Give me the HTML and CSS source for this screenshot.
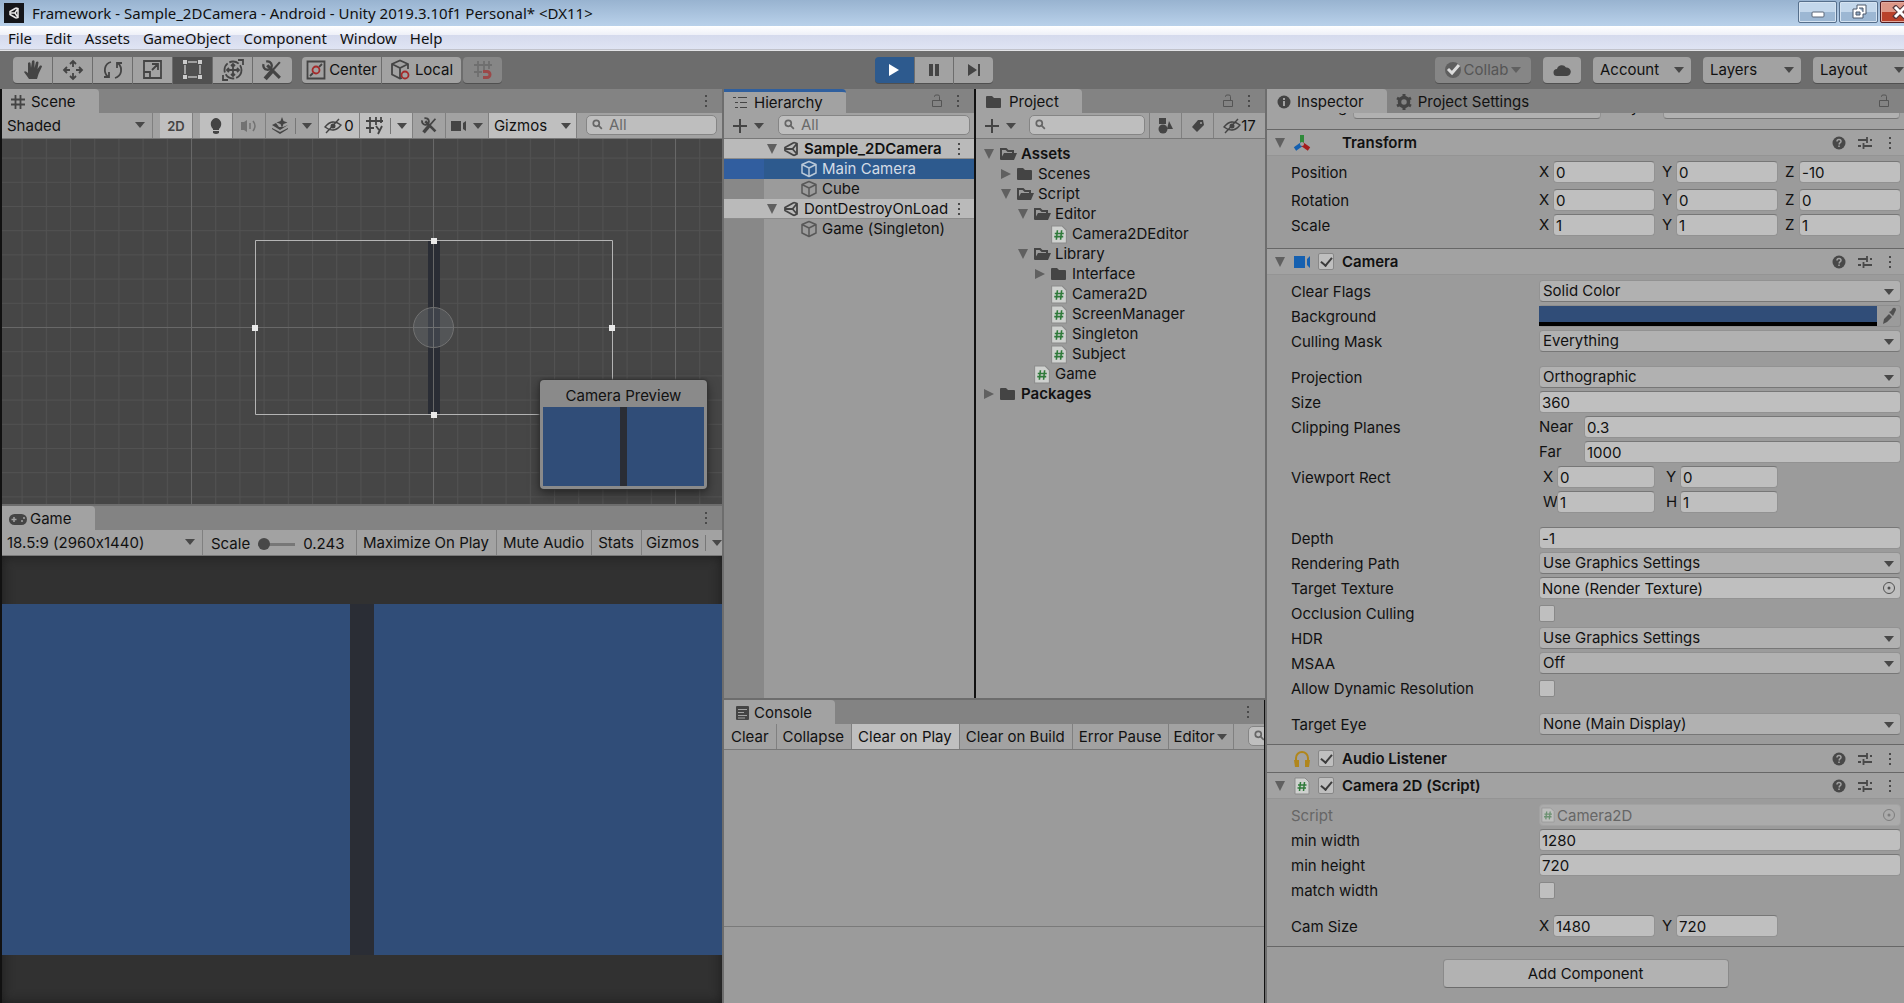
FILE: index.html
```html
<!DOCTYPE html>
<html lang="en">
<head>
  <meta charset="UTF-8" />
  <meta name="viewport" content="width=device-width, initial-scale=1.0" />
  <title>Framework - Sample_2DCamera</title>
  <link rel="stylesheet" href="styles.css">
</head>
<body>
  <!-- shared icons -->
  <svg class="defs" aria-hidden="true">
    <symbol id="i-dots" viewBox="0 0 4 14"><path d="M1 1h2v2H1zM1 6h2v2H1zM1 11h2v2H1z" /></symbol>
    <symbol id="i-lock" viewBox="0 0 12 14"><path d="M1.5 6.5h9v6h-9zM3.5 3V2.5q0-1.500 1.500-1.500h2q1.500 0 1.500 1.500v4" fill="none" stroke="currentColor" /></symbol>
    <symbol id="i-search" viewBox="0 0 14 14"><circle cx="5" cy="5" r="3.500" fill="none" stroke="currentColor" stroke-width="2" /><path d="M7.500 7.500l4 4" stroke="currentColor" stroke-width="2" /></symbol>
    <symbol id="i-plus" viewBox="0 0 16 16"><path d="M7 1h2v6h6v2H9v6H7V9H1V7h6z" /></symbol>
    <symbol id="i-down" viewBox="0 0 10 6"><path d="M0 0h10L5 6z" /></symbol>
    <symbol id="i-open" viewBox="0 0 12 12"><path d="M1 1h10L6 11z" /></symbol>
    <symbol id="i-closed" viewBox="0 0 12 12"><path d="M1 1v10l10-5z" /></symbol>
    <symbol id="i-folder" viewBox="0 0 18 16"><path d="M1 3q0-1 1-1h5l2 2h6q1 0 1 1v8q0 1-1 1H2q-1 0-1-1z" /></symbol>
    <symbol id="i-folder-open" viewBox="0 0 18 16"><path d="M2 13V3h5l2 2h5v2" fill="none" stroke="currentColor" stroke-width="2" /><path d="M5 7h13l-3 7H1z" /></symbol>
    <symbol id="i-script" viewBox="0 0 16 18"><path d="M1 1h10l4 4v12H1z" fill="#cfd1cf" stroke="#8b8b8b" /><path d="M6.500 5L5.500 14M10.500 5L9.500 14M4 8h8.500M3.500 11H12" stroke="#2f7a3a" stroke-width="1.500" fill="none" /></symbol>
    <symbol id="i-cube" viewBox="0 0 18 18"><path d="M9 1.500l7 3v8.500l-7 3.500-7-3.500V4.500zM2 4.500l7 3.500 7-3.500M9 8v8.500" fill="none" stroke="currentColor" stroke-width="1.500" stroke-linejoin="round" /></symbol>
    <symbol id="i-unity" viewBox="0 0 18 18"><path d="M12 2.500L3 7.500v3l9 5M12 2.500l3 1v10.500l-3 1.500M3 9h7.500M10.500 9L15 3.500M10.500 9L15 14" fill="none" stroke="currentColor" stroke-width="1.800" stroke-linejoin="round" /></symbol>
    <symbol id="i-help" viewBox="0 0 14 14"><circle cx="7" cy="7" r="6.500" /><path d="M5 5.500Q5 3.500 7 3.500T9 5.500Q9 6.500 7.500 7.200L7 8.500M7 9.500v1.500" fill="none" stroke="#a2a2a2" stroke-width="1.500" /></symbol>
    <symbol id="i-preset" viewBox="0 0 14 14"><path d="M0 4h9M12 4h2M9 1v6M0 10h3M6 10h8M5.500 7v6" fill="none" stroke="currentColor" stroke-width="1.800" /></symbol>
    <symbol id="i-picker" viewBox="0 0 14 14"><circle cx="7" cy="7" r="5.500" fill="none" stroke="currentColor" /><circle cx="7" cy="7" r="1.500" /></symbol>
    <symbol id="i-tools" viewBox="0 0 20 20"><path d="M5 5l12 12" stroke="currentColor" stroke-width="3" /><path d="M4 1.500A4 4 0 1 1 1.500 4" fill="none" stroke="currentColor" stroke-width="2.200" /><path d="M17 2L9 11" stroke="currentColor" stroke-width="2" /><path d="M9.500 10.500L3 18" stroke="currentColor" stroke-width="4" /></symbol>
    <symbol id="i-eye" viewBox="0 0 18 16"><path d="M1 9q7-9 16-2-7 9-16 2z" fill="none" stroke="currentColor" stroke-width="1.400" /><circle cx="9" cy="8" r="2.500" /><path d="M2 15L15 1" stroke="currentColor" stroke-width="1.400" /></symbol>
  </svg>

  <header class="titlebar">
    <svg class="app-icon" viewBox="0 0 20 20"><rect width="20" height="20" fill="#15161a" /><path d="M12 5L6 8.500v3l6 3.500M12 5l2 .5v9l-2 .5M6 10h5l3-4.500M11 10l3 4.500" fill="none" stroke="#e8e8e8" stroke-width="1.500" /></svg>
    <span class="title">Framework - Sample_2DCamera - Android - Unity 2019.3.10f1 Personal* &lt;DX11&gt;</span>
    <div class="window-buttons">
      <button aria-label="Minimize"><svg width="14" height="14"><rect x="1" y="7" width="12" height="5" rx="1" fill="#fff" stroke="#5a6678" /></svg></button>
      <button aria-label="Restore"><svg width="16" height="16"><path d="M6 1h9v9h-3v4H2V5h4z" fill="#fff" stroke="#4c586a" /><path d="M5 8h4v3H5zM8 4h4v4" fill="#93abc6" stroke="#4c586a" /></svg></button>
      <button class="close" aria-label="Close"><svg width="16" height="14"><path d="M2 1l12 12M14 1L2 13" stroke="#53353a" stroke-width="5" /><path d="M3 2l10 10M13 2L3 12" stroke="#fff" stroke-width="3" /></svg></button>
    </div>
  </header>

  <nav class="menubar">
    <a href="#">File</a><a href="#">Edit</a><a href="#">Assets</a><a href="#">GameObject</a><a href="#">Component</a><a href="#">Window</a><a href="#">Help</a>
  </nav>

  <div class="toolbar">
    <div class="group tools">
      <button aria-label="Hand"><svg width="20" height="22" viewBox="0 0 20 22"><path d="M6 20q-2-3-5-7 1-2 4 1V4q1.500-1.500 2.500 0l.5 5 1-7q1.500-1.500 2.500 0v7l1.500-6q2-1 2.500.5L14.500 10 17 6.500q2-.5 2 1L15.500 15 14 20z" /></svg></button>
      <button aria-label="Move"><svg width="22" height="22" viewBox="0 0 22 22" class="line"><path d="M11 2v6M11 14v6M2 11h6M14 11h6M8 5l3-3 3 3M8 17l3 3 3-3M5 8l-3 3 3 3M17 8l3 3-3 3" /></svg></button>
      <button aria-label="Rotate"><svg width="22" height="22" viewBox="0 0 22 22" class="line"><path d="M9 3C2 5 1 13 6 18M2 18h5v-5M13 19c7-2 8-10 3-15M20 4h-5v5" /></svg></button>
      <button aria-label="Scale"><svg width="22" height="22" viewBox="0 0 22 22" class="line"><path d="M2 2h17v17H2zM2 13h6v6M10 11l6-6M10 5h6v6" /></svg></button>
      <button class="pressed" aria-label="Rect"><svg width="22" height="22" viewBox="0 0 22 22"><path d="M6 3h9M6 18h9M3 6v9M18 6v9" fill="none" stroke="#bbb" stroke-width="1.500" /><path d="M1 1h4v4H1zM16 1h4v4h-4zM1 16h4v4H1zM16 16h4v4h-4z" fill="#ccc" /></svg></button>
      <button aria-label="Transform"><svg width="24" height="24" viewBox="0 0 24 24" class="line"><circle cx="12" cy="12" r="8.500" stroke-dasharray="10 2" /><path d="M12 6v12M6 12h12M10 8l2-2 2 2M10 16l2 2 2-2M8 10l-2 2 2 2M16 10l2 2-2 2M17 2h5v5M7 22H2v-5" /></svg></button>
      <button aria-label="Custom tools"><svg width="21" height="21"><use href="#i-tools" /></svg></button>
    </div>
    <div class="group pivot">
      <button><svg width="20" height="20" viewBox="0 0 20 20" class="line"><path d="M1.500 1.500h17v17h-17zM4 16l3-3M13 7l3-3" /><circle cx="10" cy="10" r="3.500" stroke="#a52a2a" /></svg>Center</button>
      <button><svg width="22" height="22" viewBox="0 0 22 22" class="line"><path d="M12 19l-2 .5-8-4V5l8-3.500L18 5v5M2 5l8 4 8-4M10 9v10" /><circle cx="15" cy="16" r="3.500" stroke="#a52a2a" /></svg>Local</button>
    </div>
    <div class="group snap">
      <button disabled aria-label="Grid snapping"><svg width="20" height="20" viewBox="0 0 20 20" class="line"><path d="M5 1v16M11 1v9M16 1v8M1 5h18M1 12h8" /><path d="M10 11.500h4a3 3 0 0 1 0 6h-4" stroke="#a53030" stroke-width="3" /></svg></button>
    </div>
    <div class="group play">
      <button class="active" aria-label="Play"><svg width="12" height="14"><path d="M1 1v12l10-6z" fill="#fff" /></svg></button>
      <button aria-label="Pause"><svg width="12" height="14"><path d="M1 1h4v12H1zM7 1h4v12H7z" /></svg></button>
      <button aria-label="Step"><svg width="14" height="14"><path d="M1 1v12l9-6zM11 1h2v12h-2z" /></svg></button>
    </div>
    <div class="right-tools">
      <button class="collab" disabled><svg width="16" height="16"><circle cx="8" cy="8" r="8" fill="#5f5f5f" /><path d="M3 7l4 4 7-8" fill="none" stroke="#ddd" stroke-width="3" /></svg>Collab<svg class="arrow"><use href="#i-down" /></svg></button>
      <button class="cloud" aria-label="Cloud"><svg width="18" height="14" viewBox="0 0 18 14"><path d="M4 13a3.500 3.500 0 0 1 0-7 5 5 0 0 1 9-1.500A4 4 0 0 1 14 13z" /></svg></button>
      <button class="drop">Account<svg class="arrow"><use href="#i-down" /></svg></button>
      <button class="drop">Layers<svg class="arrow"><use href="#i-down" /></svg></button>
      <button class="drop">Layout<svg class="arrow"><use href="#i-down" /></svg></button>
    </div>
  </div>

  <main class="workspace">
    <div class="column views">
      <section class="panel scene">
        <div class="tabs">
          <div class="tab"><svg width="14" height="14" class="line" viewBox="0 0 14 14"><path d="M4.500 0v14M9.500 0v14M0 4.500h14M0 9.500h14" /></svg>Scene</div>
          <svg class="dots"><use href="#i-dots" /></svg>
        </div>
        <div class="bar scene-bar">
          <div class="select shading"><select aria-label="Shading mode"><option>Shaded</option></select></div>
          <button class="on two-d">2D</button>
          <button class="on w33" aria-label="Lighting"><svg width="12" height="18" viewBox="0 0 12 18"><path d="M3 12Q0 9 1 5q2-4 5-4t5 4q1 4-2 7v1H3zM3 14h6v2q-3 2-6 0z" /></svg></button>
          <button class="w33 faded" aria-label="Audio"><svg width="16" height="14" viewBox="0 0 16 14"><path d="M0 3h3l3-2v12l-3-2H0z" /><path d="M9 4v6M12 2q4 5 0 10" fill="none" stroke="currentColor" stroke-width="1.500" /></svg></button>
          <button class="w53" aria-label="Effects"><svg width="17" height="17" viewBox="0 0 17 17"><path d="M0 8l4-2 3 4 4 0 5-2-8 5zM0 11l8 4 8-4v1l-8 5-8-5zM10 0l1.500 4 4 1.500-4 1.500L10 11 8.500 7l-4-1.500 4-1.500z" /></svg><i></i><svg class="arrow"><use href="#i-down" /></svg></button>
          <button class="on eye"><svg width="18" height="16"><use href="#i-eye" /></svg>0</button>
          <button class="on w53" aria-label="Grid"><svg width="18" height="18" viewBox="0 0 18 18" class="line"><path d="M4 0v16M10 0v8M15 0v6M0 4h17M0 11h8M10 9l3 4M16 9l-4 8" /></svg><i></i><svg class="arrow"><use href="#i-down" /></svg></button>
          <button class="w33" aria-label="Tools"><svg width="17" height="17"><use href="#i-tools" /></svg></button>
          <button class="w43" aria-label="Camera"><svg width="16" height="12"><path d="M0 1h10v10H0zM12 3l3-2v10l-3-2z" /></svg><svg class="arrow"><use href="#i-down" /></svg></button>
          <button class="on gizmos">Gizmos<i></i><svg class="arrow"><use href="#i-down" /></svg></button>
          <label class="search"><svg><use href="#i-search" /></svg><input type="text" placeholder="All" aria-label="Search scene"></label>
        </div>
        <div class="scene-view">
          <svg viewBox="0 0 720 365" preserveAspectRatio="xMinYMin slice">
            <defs>
              <pattern id="grid" width="24.200" height="24.200" patternUnits="userSpaceOnUse" x="431" y="188"><path d="M0 .5h24.200M.5 0v24.200" stroke="#525252" /></pattern>
            </defs>
            <rect width="720" height="365" fill="#464646" />
            <rect width="720" height="365" fill="url(#grid)" />
            <path d="M426 101h12v174h-12z" fill="#2a2d35" />
            <path d="M189.500 0v365M431.500 0v365M673.500 0v365M0 188.500h720" stroke="#686868" />
            <circle cx="431.500" cy="188.500" r="20" fill="rgba(125,130,140,.25)" stroke="#727272" />
            <path d="M253.500 101.500h357v174h-357z" fill="none" stroke="#b4b4b4" />
            <path d="M429 99h6v6h-6zM429 273h6v6h-6zM250 186h6v6h-6zM607 186h6v6h-6z" fill="#eaeaea" />
          </svg>
          <div class="preview">
            <div class="preview-title">Camera Preview</div>
            <div class="preview-image"></div>
          </div>
        </div>
      </section>

      <section class="panel game">
        <div class="tabs">
          <div class="tab"><svg width="18" height="13" viewBox="0 0 18 13"><rect y="1" width="18" height="11" rx="5.500" /><path d="M5 4v5M2.500 6.500h5M12 8h2M14 5h2" stroke="#a2a2a2" stroke-width="1.500" /></svg>Game</div>
          <svg class="dots"><use href="#i-dots" /></svg>
        </div>
        <div class="bar game-bar">
          <div class="select aspect"><select aria-label="Aspect"><option>18.5:9 (2960x1440)</option></select></div>
          <label class="scale">Scale<input type="range" min="0" max="100" value="0"><output>0.243</output></label>
          <button>Maximize On Play</button>
          <button>Mute Audio</button>
          <button>Stats</button>
          <button class="last">Gizmos<i></i><svg class="arrow"><use href="#i-down" /></svg></button>
        </div>
        <div class="game-view"><div class="game-image"></div></div>
      </section>
    </div>

    <div class="column middle">
      <div class="browsers">
        <section class="panel hierarchy">
          <div class="tabs">
            <div class="tab focus"><svg width="15" height="14" viewBox="0 0 15 14"><path d="M0 1h3v1H0zM5 1h9v1H5zM2 6h3v1H2zM7 6h7v1H7zM2 11h3v1H2zM7 11h7v1H7z" /></svg>Hierarchy</div>
            <svg class="lock"><use href="#i-lock" /></svg>
            <svg class="dots"><use href="#i-dots" /></svg>
          </div>
          <div class="bar browser-bar">
            <button class="add" aria-label="Create"><svg width="16" height="16"><use href="#i-plus" /></svg><svg class="arrow"><use href="#i-down" /></svg></button>
            <label class="search"><svg><use href="#i-search" /></svg><input type="text" placeholder="All" aria-label="Search hierarchy"></label>
          </div>
          <ul class="hierarchy-list">
            <li class="scene-row bold"><svg class="fold"><use href="#i-open" /></svg><svg class="icon"><use href="#i-unity" /></svg><span>Sample_2DCamera</span><svg class="dots"><use href="#i-dots" /></svg></li>
            <li class="object selected"><svg class="icon"><use href="#i-cube" /></svg><span>Main Camera</span></li>
            <li class="object"><svg class="icon"><use href="#i-cube" /></svg><span>Cube</span></li>
            <li class="scene-row"><svg class="fold"><use href="#i-open" /></svg><svg class="icon"><use href="#i-unity" /></svg><span>DontDestroyOnLoad</span><svg class="dots"><use href="#i-dots" /></svg></li>
            <li class="object"><svg class="icon"><use href="#i-cube" /></svg><span>Game (Singleton)</span></li>
          </ul>
        </section>

        <section class="panel project">
          <div class="tabs">
            <div class="tab"><svg width="18" height="16"><use href="#i-folder" /></svg>Project</div>
            <svg class="lock"><use href="#i-lock" /></svg>
            <svg class="dots"><use href="#i-dots" /></svg>
          </div>
          <div class="bar browser-bar">
            <button class="add" aria-label="Create"><svg width="16" height="16"><use href="#i-plus" /></svg><svg class="arrow"><use href="#i-down" /></svg></button>
            <label class="search"><svg><use href="#i-search" /></svg><input type="text" aria-label="Search project"></label>
            <button class="filter" aria-label="Search by type"><svg width="16" height="16"><path d="M1 0h7v6H1zM11 3l4 8H9z" /><circle cx="5" cy="11" r="4.500" /></svg></button>
            <button class="filter" aria-label="Search by label"><svg width="14" height="14"><path d="M7 1h5l1 5-7 7-5-5z" /><circle cx="10" cy="4" r="1" fill="#a2a2a2" /></svg></button>
            <button class="hidden-count"><svg width="18" height="16"><use href="#i-eye" /></svg>17</button>
          </div>
          <ul class="tree">
            <li class="bold"><svg class="fold"><use href="#i-open" /></svg><svg class="icon"><use href="#i-folder-open" /></svg>Assets</li>
            <li class="l1"><svg class="fold"><use href="#i-closed" /></svg><svg class="icon"><use href="#i-folder" /></svg>Scenes</li>
            <li class="l1"><svg class="fold"><use href="#i-open" /></svg><svg class="icon"><use href="#i-folder-open" /></svg>Script</li>
            <li class="l2"><svg class="fold"><use href="#i-open" /></svg><svg class="icon"><use href="#i-folder-open" /></svg>Editor</li>
            <li class="l3 file"><svg class="icon"><use href="#i-script" /></svg>Camera2DEditor</li>
            <li class="l2"><svg class="fold"><use href="#i-open" /></svg><svg class="icon"><use href="#i-folder-open" /></svg>Library</li>
            <li class="l3"><svg class="fold"><use href="#i-closed" /></svg><svg class="icon"><use href="#i-folder" /></svg>Interface</li>
            <li class="l3 file"><svg class="icon"><use href="#i-script" /></svg>Camera2D</li>
            <li class="l3 file"><svg class="icon"><use href="#i-script" /></svg>ScreenManager</li>
            <li class="l3 file"><svg class="icon"><use href="#i-script" /></svg>Singleton</li>
            <li class="l3 file"><svg class="icon"><use href="#i-script" /></svg>Subject</li>
            <li class="l2 file"><svg class="icon"><use href="#i-script" /></svg>Game</li>
            <li class="bold"><svg class="fold"><use href="#i-closed" /></svg><svg class="icon"><use href="#i-folder" /></svg>Packages</li>
          </ul>
        </section>
      </div>

      <section class="panel console">
        <div class="tabs">
          <div class="tab"><svg width="13" height="14"><rect width="13" height="14" rx="1" /><path d="M2 3.500h9M2 6.500h6M2 9.500h9M2 12h7" stroke="#a2a2a2" /></svg>Console</div>
          <svg class="dots"><use href="#i-dots" /></svg>
        </div>
        <div class="bar console-bar">
          <button>Clear</button>
          <button>Collapse</button>
          <button class="on">Clear on Play</button>
          <button>Clear on Build</button>
          <button>Error Pause</button>
          <button class="target">Editor<svg class="arrow"><use href="#i-down" /></svg></button>
          <label class="search"><svg><use href="#i-search" /></svg><input type="text" aria-label="Search console"></label>
        </div>
        <div class="console-list"></div>
        <div class="console-detail"></div>
      </section>
    </div>

    <section class="panel inspector">
      <div class="tabs">
        <div class="tab"><svg width="14" height="14"><circle cx="7" cy="7" r="6.500" /><path d="M6 3h2v2H6zM6 6h2v5H6z" fill="#a2a2a2" /></svg>Inspector</div>
        <div class="tab back"><svg width="16" height="16" viewBox="0 0 16 16"><circle cx="8" cy="8" r="4.500" fill="none" stroke="currentColor" stroke-width="3.500" /><path d="M8 0v3M8 13v3M1 4l3 1.500M12 10.500l3 1.500M1 12l3-1.500M12 5.500L15 4" stroke="currentColor" stroke-width="3" /></svg>Project Settings</div>
        <svg class="lock"><use href="#i-lock" /></svg>
      </div>

      <!-- bottom of the object header, scrolled under the tabs -->
      <div class="scrolled">
        <label for="tag">Tag</label><div class="select"><select id="tag"><option></option></select></div>
        <label for="layer">Layer</label><div class="select"><select id="layer"><option></option></select></div>
      </div>

      <div class="component-head">
        <svg class="fold"><use href="#i-open" /></svg>
        <svg class="kind" viewBox="0 0 18 18"><path d="M9 1v8" stroke="#2f8a3a" stroke-width="4" /><path d="M9 10l-7 5" stroke="#1560b0" stroke-width="4" /><path d="M9 10l7 5" stroke="#a51c1c" stroke-width="4" /><circle cx="9" cy="10" r="2" fill="#a2a2a2" /></svg>
        <h2 class="no-check">Transform</h2>
        <svg><use href="#i-help" /></svg><svg><use href="#i-preset" /></svg><svg class="dots"><use href="#i-dots" /></svg>
      </div>
      <div class="fields transform">
        <div class="field roomy"><span class="name">Position</span><div class="vector"><label>X<input value="0"></label><label>Y<input value="0"></label><label>Z<input value="-10"></label></div></div>
        <div class="field"><span class="name">Rotation</span><div class="vector"><label>X<input value="0"></label><label>Y<input value="0"></label><label>Z<input value="0"></label></div></div>
        <div class="field"><span class="name">Scale</span><div class="vector"><label>X<input value="1"></label><label>Y<input value="1"></label><label>Z<input value="1"></label></div></div>
      </div>

      <div class="component-head">
        <svg class="fold"><use href="#i-open" /></svg>
        <svg class="kind" viewBox="0 0 18 18"><path d="M1 3h11v12H1zM14 6l3-3v12l-3-3z" fill="#1560b0" /></svg>
        <input type="checkbox" checked aria-label="Camera enabled">
        <h2>Camera</h2>
        <svg><use href="#i-help" /></svg><svg><use href="#i-preset" /></svg><svg class="dots"><use href="#i-dots" /></svg>
      </div>
      <div class="fields">
        <div class="field"><label class="name" for="flags">Clear Flags</label><div class="select"><select id="flags"><option>Solid Color</option></select></div></div>
        <div class="field"><span class="name">Background</span><div class="color"><button class="swatch" aria-label="Background color"></button><svg width="16" height="18" viewBox="0 0 16 18"><path d="M3 12l5-5 3 3-5 5-4 2zM8 5l2-1 2-3q3-1 3 2l-2 4-1 2z" /></svg></div></div>
        <div class="field"><label class="name" for="mask">Culling Mask</label><div class="select"><select id="mask"><option>Everything</option></select></div></div>
        <div class="field spaced"><label class="name" for="projection">Projection</label><div class="select"><select id="projection"><option>Orthographic</option></select></div></div>
        <div class="field"><label class="name" for="size">Size</label><input id="size" value="360"></div>
        <div class="field"><span class="name">Clipping Planes</span><label class="plane">Near<input value="0.3"></label></div>
        <div class="field"><span class="name"></span><label class="plane">Far<input value="1000"></label></div>
        <div class="field"><span class="name">Viewport Rect</span><div class="vector rect"><label>X<input value="0"></label><label>Y<input value="0"></label></div></div>
        <div class="field"><span class="name"></span><div class="vector rect"><label>W<input value="1"></label><label>H<input value="1"></label></div></div>
        <div class="field spaced"><label class="name" for="depth">Depth</label><input id="depth" value="-1"></div>
        <div class="field"><label class="name" for="path">Rendering Path</label><div class="select"><select id="path"><option>Use Graphics Settings</option></select></div></div>
        <div class="field"><label class="name" for="texture">Target Texture</label><div class="object-field"><input id="texture" value="None (Render Texture)"><svg><use href="#i-picker" /></svg></div></div>
        <div class="field"><label class="name" for="occlusion">Occlusion Culling</label><input type="checkbox" id="occlusion"></div>
        <div class="field"><label class="name" for="hdr">HDR</label><div class="select"><select id="hdr"><option>Use Graphics Settings</option></select></div></div>
        <div class="field"><label class="name" for="msaa">MSAA</label><div class="select"><select id="msaa"><option>Off</option></select></div></div>
        <div class="field"><label class="name" for="dynamic">Allow Dynamic Resolution</label><input type="checkbox" id="dynamic"></div>
        <div class="field spaced"><label class="name" for="target-eye">Target Eye</label><div class="select"><select id="target-eye"><option>None (Main Display)</option></select></div></div>
      </div>

      <div class="component-head collapsed">
        <svg class="fold"></svg>
        <svg class="kind" viewBox="0 0 18 18"><path d="M3 14V8a6 6 0 0 1 12 0v6" fill="none" stroke="#b0861c" stroke-width="2" /><path d="M1 10h5v7H2zM12 10h5l-1 7h-4z" fill="#b0861c" /></svg>
        <input type="checkbox" checked aria-label="Audio Listener enabled">
        <h2>Audio Listener</h2>
        <svg><use href="#i-help" /></svg><svg><use href="#i-preset" /></svg><svg class="dots"><use href="#i-dots" /></svg>
      </div>

      <div class="component-head">
        <svg class="fold"><use href="#i-open" /></svg>
        <svg class="kind"><use href="#i-script" /></svg>
        <input type="checkbox" checked aria-label="Camera 2D enabled">
        <h2>Camera 2D (Script)</h2>
        <svg><use href="#i-help" /></svg><svg><use href="#i-preset" /></svg><svg class="dots"><use href="#i-dots" /></svg>
      </div>
      <div class="fields">
        <div class="field disabled"><label class="name" for="script">Script</label><div class="object-field"><svg class="icon"><use href="#i-script" /></svg><input id="script" value="Camera2D" disabled><svg><use href="#i-picker" /></svg></div></div>
        <div class="field"><label class="name" for="min-width">min width</label><input id="min-width" value="1280"></div>
        <div class="field"><label class="name" for="min-height">min height</label><input id="min-height" value="720"></div>
        <div class="field"><label class="name" for="match">match width</label><input type="checkbox" id="match"></div>
        <div class="field spaced"><span class="name">Cam Size</span><div class="vector"><label>X<input value="1480"></label><label>Y<input value="720"></label></div></div>
      </div>
      <div class="add-row"><button class="add-component">Add Component</button></div>
    </section>
  </main>
</body>
</html>
```
FILE: styles.css
```css
* {
  margin: 0;
  padding: 0;
  box-sizing: border-box;
}

body {
  height: 100vh;
  display: flex;
  flex-direction: column;
  font: 15px/20px Inter, "Liberation Sans", sans-serif;
  font-variant-ligatures: no-contextual;
  color: #111;
  background: #6d6d6d;
  overflow: hidden;
}

button, input, select {
  font: inherit;
  font-variant-ligatures: inherit;
  color: inherit;
  border: none;
  background: none;
  border-radius: 0;
  appearance: none;
  outline: none;
}

svg {
  flex: none;
  fill: currentColor;
}

svg.line {
  fill: none;
  stroke: currentColor;
  stroke-width: 1.8;
}

ul {
  list-style: none;
}

.defs {
  position: absolute;
  width: 0;
  height: 0;
}

.arrow {
  width: 10px;
  height: 6px;
  color: #484848;
}

.dots {
  width: 4px;
  height: 14px;
  color: #4a4a4a;
}

.lock {
  width: 12px;
  height: 14px;
  color: #555;
}

.bold {
  font-weight: 600;
}

/* window chrome */
.titlebar {
  height: 26px;
  flex: none;
  display: flex;
  align-items: center;
  padding-left: 4px;
  background: linear-gradient(#98b3d0, #b9d1ea);
  font-family: "Noto Sans", sans-serif;
  overflow: hidden;
}

.app-icon {
  width: 20px;
  height: 20px;
  margin-right: 8px;
}

.title {
  flex: 1;
  white-space: nowrap;
}

.window-buttons {
  display: flex;
  gap: 2px;
  height: 24px;
  margin-right: -15px;
}

.window-buttons button {
  width: 39px;
  height: 22px;
  display: grid;
  place-items: center;
  border: 1px solid #566f8c;
  border-radius: 2px;
  background: linear-gradient(#c3d7eb 50%, #9cb7d3 50%);
  box-shadow: inset 0 0 0 1px #d5e3f1;
}

.window-buttons .close {
  border-color: #4f1c22;
  background: linear-gradient(#dc9787 50%, #b9412b 50%);
  box-shadow: inset 0 0 0 1px #e2aa9f;
}

.menubar {
  height: 25px;
  flex: none;
  display: flex;
  gap: 13px;
  padding: 0 0 2px 8px;
  align-items: center;
  background: linear-gradient(#fff, #eef0f8 36%, #d5daed 36%, #dfe4f4 92%, #b0b2bd 92%, #f4f4f4);
  font-family: "Noto Sans", sans-serif;
}

.menubar a {
  color: #111;
  text-decoration: none;
}

/* main toolbar */
.toolbar {
  height: 38px;
  flex: none;
  display: grid;
  grid-template-columns: 289px 159px minmax(0, 414fr) 118px minmax(0, 911fr);
  align-items: center;
  padding-left: 13px;
  color: #444;
}

.group {
  display: flex;
  gap: 1px;
}

.toolbar button {
  height: 26px;
  display: flex;
  align-items: center;
  justify-content: center;
  background: #a2a2a2;
  box-shadow: 0 1px 0 #505050;
}

.group button {
  width: 39px;
}

.group button:first-child {
  border-radius: 4px 0 0 4px;
}

.group button:last-child {
  border-radius: 0 4px 4px 0;
}

.group button.pressed {
  background: #505050;
}

.group button.active {
  background: #2d5a8e;
}

.pivot button {
  width: 79px;
  gap: 3px;
}

.pivot button,
.right-tools .drop {
  color: #111;
}

.pivot svg {
  color: #444;
}

.snap {
  padding-left: 2px;
}

.snap button:first-child {
  border-radius: 4px;
  background: #868686;
  color: #666;
}

.snap svg {
  opacity: .7;
}

.right-tools {
  display: flex;
  justify-content: flex-end;
  gap: 12px;
  margin-right: -7px;
}

.right-tools button {
  border-radius: 4px;
}

.right-tools .collab {
  width: 96px;
  gap: 3px;
  background: #868686;
  color: #555;
}

.collab .arrow {
  opacity: .6;
}

.right-tools .cloud {
  width: 38px;
}

.right-tools .drop {
  width: 98px;
  justify-content: space-between;
  padding: 0 7px;
}

/* panels */
.workspace {
  flex: 1;
  min-height: 0;
  display: grid;
  grid-template-columns: minmax(0, 720fr) minmax(0, 541fr) minmax(0, 637fr);
  gap: 2px;
  border-left: 2px solid #111;
}

.column {
  display: grid;
  gap: 2px;
  min-height: 0;
}

.views {
  grid-template-rows: minmax(0, 415fr) minmax(0, 497fr);
}

.middle {
  grid-template-rows: minmax(0, 609fr) minmax(0, 303fr);
}

.browsers {
  display: grid;
  grid-template-columns: minmax(0, 250fr) minmax(0, 289fr);
  gap: 2px;
  background: #111;
  min-height: 0;
}

.panel {
  display: flex;
  flex-direction: column;
  min-width: 0;
  min-height: 0;
  overflow: hidden;
  background: #9b9b9b;
}

.tabs {
  height: 24px;
  flex: none;
  display: flex;
  align-items: center;
  gap: 13px;
  padding-right: 14px;
  background: #838383;
}

.tabs .tab {
  display: flex;
  align-items: center;
  gap: 6px;
  height: 24px;
  padding: 2px 23px 0 9px;
  margin-right: auto;
  background: #a2a2a2;
  border-radius: 0 4px 0 0;
}

.tabs .tab svg {
  color: #444;
}

.tabs .focus {
  padding-top: 0;
  border-top: 3px solid #2f5f9e;
}

.tabs .back {
  background: none;
  padding: 2px 0 0;
}

.bar {
  height: 26px;
  flex: none;
  display: flex;
  background: #a2a2a2;
  border-bottom: 1px solid #787878;
  overflow: hidden;
}

.bar button {
  flex: none;
  display: flex;
  align-items: center;
  justify-content: center;
  gap: 6px;
  padding: 0 5px;
  border-right: 1px solid #808080;
  white-space: nowrap;
}

.bar button svg:not(.arrow) {
  color: #444;
}

.bar .on {
  background: #bfbfbf;
}

.bar i {
  width: 1px;
  height: 16px;
  background: #777;
}

.search {
  flex: 1;
  min-width: 0;
  display: flex;
  align-items: center;
  gap: 4px;
  height: 20px;
  margin: 2px 5px 2px 9px;
  padding-left: 4px;
  border: 1px solid #858585;
  border-radius: 5px;
  background: #bebebe;
  color: #666;
}

.search svg {
  width: 14px;
  height: 12px;
}

.search input {
  flex: 1;
  width: 100%;
  min-width: 0;
}

.search input::placeholder {
  color: #6a6a6a;
  opacity: 1;
}

.select {
  position: relative;
}

.select select {
  width: 100%;
  height: 22px;
  padding: 0 22px 2px 3px;
  background: #b1b1b1;
  border: 1px solid #929292;
  border-bottom-color: #777;
  border-radius: 4px;
}

.select::after {
  content: "";
  position: absolute;
  right: 7px;
  top: 9px;
  border: 5px solid transparent;
  border-top: 6px solid #484848;
  border-bottom: none;
}

.bar .select {
  border-right: 1px solid #808080;
}

.bar .select select {
  height: 25px;
  padding: 0 22px 0 5px;
  background: none;
  border: none;
}

/* scene */
.scene-bar .shading {
  width: 151px;
  margin-right: 7px;
}

.scene-bar button.two-d {
  width: 33px;
  margin-right: 7px;
  font-size: 13px;
  font-weight: 600;
  color: #444;
}

.scene-bar .w33 {
  width: 33px;
}

.scene-bar .w43 {
  width: 43px;
}

.scene-bar .w53 {
  width: 53px;
}

.scene-bar .eye {
  width: 41px;
  gap: 2px;
}

.scene-bar .gizmos {
  width: 88px;
  gap: 7px;
}

.faded svg {
  opacity: .5;
}

.scene-view {
  flex: 1;
  min-height: 0;
  position: relative;
  background: #464646;
  overflow: hidden;
}

.scene-view > svg {
  display: block;
  width: 100%;
  height: 100%;
}

/* floats over the scene */
.preview {
  position: absolute;
  right: 15px;
  bottom: 15px;
  width: 167px;
  padding: 0 3px 3px;
  border-radius: 4px;
  background: #8a8a8a;
  box-shadow: 0 0 2px 1px #333, 0 4px 12px rgba(0, 0, 0, .5);
}

.preview-title {
  padding: 6px 0 1px;
  text-align: center;
}

.preview-image {
  height: 79px;
  background: linear-gradient(90deg, #304d78 48%, #2a2d35 48% 52%, #304d78 52%);
}

/* game */
.game .tab {
  padding: 2px 23px 0 7px;
  gap: 3px;
}

.game-bar .aspect {
  width: 201px;
  flex: none;
}

.game-bar .scale {
  width: 154px;
  flex: none;
  display: flex;
  align-items: center;
  gap: 8px;
  padding: 3px 0 0 8px;
  border-right: 1px solid #808080;
}

.game-bar input {
  width: 37px;
  height: 14px;
  background: linear-gradient(#777, #777) center / 100% 3px no-repeat;
}

.game-bar input::-webkit-slider-thumb {
  appearance: none;
  width: 12px;
  height: 12px;
  border-radius: 50%;
  background: #484848;
}

.game-bar button {
  padding: 0 7px 0 6px;
}

.game-bar button.last {
  padding: 0 4px;
  border: none;
}

.game-view {
  flex: 1;
  display: flex;
  flex-direction: column;
  justify-content: center;
  background: #313131;
  box-shadow: inset 0 0 12px #1c1c1c;
}

.game-image {
  aspect-ratio: 2960 / 1440;
  background: linear-gradient(90deg, #304d78 0 calc(50% - 12px), #2a2d35 calc(50% - 12px) calc(50% + 12px), #304d78 calc(50% + 12px));
}

/* hierarchy and project */
.browser-bar .add {
  border: none;
  padding: 0 0 0 8px;
}

.hierarchy .search {
  margin: 2px 4px 2px 14px;
}

.project .search {
  margin: 2px 4px 2px 13px;
}

.hierarchy-list {
  flex: 1;
  background: linear-gradient(90deg, #888 40px, transparent 40px);
}

.hierarchy-list li,
.tree li {
  display: flex;
  align-items: center;
  height: 20px;
  gap: 4px;
}

.fold {
  width: 12px;
  height: 12px;
  color: #606060;
}

.icon {
  width: 18px;
  height: 18px;
  color: #444;
}

.hierarchy-list .scene-row {
  padding: 0 13px 0 42px;
  background: #bababa;
  border-bottom: 1px solid #8c8c8c;
}

.scene-row span {
  flex: 1;
  overflow: hidden;
  white-space: nowrap;
}

.hierarchy-list .object {
  padding-left: 76px;
}

.object .icon {
  color: #585858;
}

.hierarchy-list .selected {
  background: linear-gradient(90deg, #315e9f 40px, #2d5a8e 40px);
  color: #d4dce6;
}

.selected .icon {
  color: #b8c8d8;
}

.project .filter {
  width: 32px;
  border: none;
  border-left: 1px solid #808080;
}

.project .hidden-count {
  width: 52px;
  gap: 0;
  border: none;
  border-left: 1px solid #808080;
}

.tree {
  padding: 5px 0 0 7px;
}

.tree .icon {
  height: 16px;
}

.tree .file .icon {
  height: 19px;
}

.tree .l1 {
  padding-left: 17px;
}

.tree .l2 {
  padding-left: 34px;
}

.tree .l3 {
  padding-left: 51px;
}

.tree .file::before {
  content: "";
  width: 12px;
}

/* console */
.console {
  border-right: 1px solid #111;
}

.console .tab {
  padding-left: 12px;
  gap: 5px;
}

.console-bar button {
  padding: 0 7px 0 6px;
  gap: 2px;
}

.console-bar button:first-child {
  padding: 0 7px;
}

.console-bar .target {
  padding: 0 6px 0 4px;
}

.console-bar .search {
  flex: none;
  width: 60px;
  margin: 2px 0 2px 14px;
}

.console-list {
  flex: 1;
  border-bottom: 1px solid #7a7a7a;
}

.console-detail {
  height: 25%;
}

/* inspector */
.inspector .tab:first-child {
  padding-left: 10px;
  margin-right: 0;
}

.inspector .tabs {
  gap: 9px;
}

.scrolled {
  height: 16px;
  flex: none;
  display: grid;
  grid-template-columns: 32px 248px 62px minmax(0, 1fr);
  align-content: end;
  padding: 0 4px 10px 54px;
  background: #a2a2a2;
  overflow: hidden;
}

.scrolled label:nth-of-type(2) {
  padding-left: 13px;
}

.component-head {
  height: 27px;
  flex: none;
  display: flex;
  align-items: center;
  gap: 12px;
  padding: 0 12px 0 7px;
  background: #a2a2a2;
  border-top: 1px solid #676767;
  border-bottom: 1px solid #949494;
}

.component-head.collapsed {
  height: 28px;
  border-bottom: none;
}

.component-head svg {
  width: 14px;
  height: 14px;
  color: #484848;
}

.component-head .fold {
  width: 12px;
  color: #606060;
}

.component-head .kind {
  width: 18px;
  height: 18px;
  margin: 0 -5px;
}

.component-head .dots {
  width: 4px;
  margin-left: 4px;
}

.component-head h2 {
  flex: 1;
  font-size: 15px;
  font-weight: 600;
  margin-left: -4px;
}

.component-head .no-check {
  margin-left: 24px;
}

.inspector input[type="checkbox"] {
  flex: none;
  width: 16px;
  height: 17px;
  border: 1px solid #888;
  border-radius: 2px;
  background: #bfbfbf;
  display: grid;
  place-items: center;
}

.inspector input[type="checkbox"]:checked::before {
  content: "";
  width: 5px;
  height: 9px;
  margin-top: -2px;
  border: solid #3c3c3c;
  border-width: 0 2px 2px 0;
  transform: rotate(40deg);
}

.fields {
  display: flex;
  flex-direction: column;
  gap: 3px;
  padding: 5px 3px 9px 24px;
}

.field {
  display: grid;
  grid-template-columns: 248px minmax(0, 1fr);
  align-items: center;
  height: 22px;
}

.name {
  padding-top: 1px;
}

.fields.transform {
  padding: 5px 3px 12px 24px;
}

.field.roomy {
  margin-bottom: 3px;
}

.field.spaced {
  margin-top: 11px;
}

.field input:not([type]) {
  width: 100%;
  min-width: 0;
  height: 22px;
  padding: 1px 2px 0;
  background: #bfbfbf;
  border: 1px solid #929292;
  border-top-color: #777;
  border-radius: 4px;
}

.vector {
  display: grid;
  grid-template-columns: repeat(3, minmax(0, 1fr));
  gap: 7px;
}

.vector label {
  display: grid;
  grid-template-columns: 14px minmax(0, 1fr);
  align-items: center;
}

.vector.rect label {
  padding-left: 4px;
}

.plane {
  display: grid;
  grid-template-columns: 45px minmax(0, 1fr);
  align-items: center;
}

.color {
  display: grid;
  grid-template-columns: minmax(0, 1fr) 23px;
  align-items: center;
  justify-items: center;
  height: 22px;
  border: 1px solid #8e8e8e;
  border-left: none;
  border-radius: 3px;
  color: #505050;
}

.swatch {
  width: 100%;
  height: 20px;
  background: #304d78;
  border-bottom: 4px solid #000;
}

.object-field {
  display: flex;
  align-items: center;
  height: 22px;
  padding-right: 4px;
  border: 1px solid #929292;
  border-top-color: #777;
  border-radius: 4px;
  background: #bfbfbf;
  color: #111;
}

.field .object-field input {
  border: none;
  height: 20px;
  background: none;
}

.object-field svg {
  width: 14px;
  height: 14px;
  color: #505050;
}

.disabled {
  color: #666;
}

.disabled .object-field {
  background: #ababab;
  border-color: #a2a2a2;
  color: #666;
}

.disabled svg {
  opacity: .5;
}

.disabled .icon {
  height: 16px;
  margin-left: 1px;
}

.add-row {
  flex: 1;
  padding-top: 12px;
  text-align: center;
  border-top: 1px solid #676767;
}

.add-component {
  width: 286px;
  height: 29px;
  border: 1px solid #8a8a8a;
  border-bottom-color: #6c6c6c;
  border-radius: 4px;
  background: #b2b2b2;
}
```
